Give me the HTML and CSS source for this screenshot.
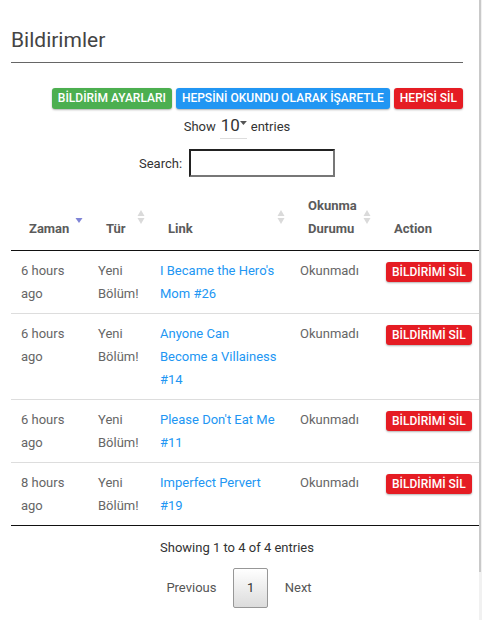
FILE: index.html
```html
<!DOCTYPE html>
<html lang="tr">
<head>
<meta charset="utf-8">
<title>Bildirimler</title>
<link rel="stylesheet" href="styles.css">
</head>
<body>
<div class="page">
  <h1 class="title">Bildirimler</h1>
  <hr class="rule">
  <div class="actions">
    <a class="btn btn-green">BİLDİRİM AYARLARI</a>
    <a class="btn btn-blue">HEPSİNİ OKUNDU OLARAK İŞARETLE</a>
    <a class="btn btn-red">HEPİSİ SİL</a>
  </div>
  <div class="length">
    <span>Show</span>
    <span class="select">10<svg class="caret" width="7" height="4" viewBox="0 0 7 4"><path d="M0 0H7L3.5 4Z" fill="#555"/></svg></span>
    <span>entries</span>
  </div>
  <div class="search">
    <label for="q">Search:</label>
    <input id="q" class="search-input" type="text">
  </div>
  <table class="table">
    <colgroup>
      <col class="c1"><col class="c2"><col class="c3"><col class="c4"><col class="c5">
    </colgroup>
    <thead>
      <tr>
        <th>Zaman<svg class="sort" width="8" height="14" viewBox="0 0 8 14"><path d="M0.5 8H7.5L4 13Z" fill="#7f84d6"/></svg></th>
        <th>Tür<svg class="sort" width="8" height="14" viewBox="0 0 8 14"><path d="M4 0L7.5 6H0.5Z M0.5 8H7.5L4 14Z" fill="#dadada"/></svg></th>
        <th>Link<svg class="sort" width="8" height="14" viewBox="0 0 8 14"><path d="M4 0L7.5 6H0.5Z M0.5 8H7.5L4 14Z" fill="#dadada"/></svg></th>
        <th>Okunma Durumu<svg class="sort" width="8" height="14" viewBox="0 0 8 14"><path d="M4 0L7.5 6H0.5Z M0.5 8H7.5L4 14Z" fill="#dadada"/></svg></th>
        <th class="nosort">Action</th>
      </tr>
    </thead>
    <tbody>
      <tr>
        <td>6 hours ago</td>
        <td>Yeni Bölüm!</td>
        <td class="linkcell"><a class="link">I Became the Hero's Mom #26</a></td>
        <td>Okunmadı</td>
        <td><a class="btn btn-red btn-sm">BİLDİRİMİ SİL</a></td>
      </tr>
      <tr>
        <td>6 hours ago</td>
        <td>Yeni Bölüm!</td>
        <td class="linkcell"><a class="link">Anyone Can Become a Villainess #14</a></td>
        <td>Okunmadı</td>
        <td><a class="btn btn-red btn-sm">BİLDİRİMİ SİL</a></td>
      </tr>
      <tr>
        <td>6 hours ago</td>
        <td>Yeni Bölüm!</td>
        <td class="linkcell"><a class="link">Please Don't Eat Me #11</a></td>
        <td>Okunmadı</td>
        <td><a class="btn btn-red btn-sm">BİLDİRİMİ SİL</a></td>
      </tr>
      <tr>
        <td>8 hours ago</td>
        <td>Yeni Bölüm!</td>
        <td class="linkcell"><a class="link">Imperfect Pervert #19</a></td>
        <td>Okunmadı</td>
        <td><a class="btn btn-red btn-sm">BİLDİRİMİ SİL</a></td>
      </tr>
    </tbody>
  </table>
  <div class="info">Showing 1 to 4 of 4 entries</div>
  <div class="paging">
    <a class="page-btn">Previous</a>
    <a class="page-btn current">1</a>
    <a class="page-btn">Next</a>
  </div>
</div>
<div class="scrollbar"><div class="thumb"></div></div>
</body>
</html>
```
FILE: styles.css
```css
html, body {
  margin: 0;
  padding: 0;
  background: #fff;
}
body {
  font-family: Roboto, "Liberation Sans", Arial, sans-serif;
  font-size: 13px;
  color: #666;
}
.page {
  width: 452px;
  padding: 0 0 0 11px;
}
.title {
  margin: 25px 0 0 0;
  font-size: 21px;
  line-height: 30px;
  font-weight: 400;
  color: #444;
}
.rule {
  margin: 7px 0 0 0;
  border: 0;
  border-top: 1px solid #666;
  height: 0;
}
.actions {
  display: flex;
  justify-content: flex-end;
  gap: 4px;
  margin-top: 25px;
}
.btn {
  display: inline-block;
  height: 21px;
  line-height: 21px;
  padding: 0 6px;
  font-size: 12px;
  font-weight: 500;
  color: #fff;
  border-radius: 3px;
  box-shadow: 0 1px 2px rgba(0, 0, 0, 0.3);
  white-space: nowrap;
}
.btn-green { background: #4caf50; }
.btn-blue { background: #2196f3; }
.btn-red { background: #e51c23; }
.btn-sm {
  height: 20px;
  line-height: 20px;
  vertical-align: middle;
  margin-top: 1px;
}
.length {
  display: flex;
  justify-content: center;
  align-items: baseline;
  gap: 4px;
  margin-top: 6px;
  color: #333;
}
.select {
  display: inline-flex;
  align-items: flex-start;
  width: 27px;
  font-size: 17px;
  line-height: 20px;
  padding: 0 0 3px 1px;
  border-bottom: 1px solid #ddd;
  color: #333;
  box-sizing: border-box;
}
.caret {
  margin-top: 6px;
}
.search {
  display: flex;
  justify-content: center;
  align-items: center;
  gap: 7px;
  margin-top: 10px;
  color: #333;
}
.search-input {
  width: 146px;
  height: 28px;
  box-sizing: border-box;
  margin: 0;
  border: 2px solid #222;
  border-right-color: #777;
  border-bottom-color: #777;
  border-radius: 0;
  outline: none;
}
.table {
  width: 468px;
  margin-top: 7px;
  border-collapse: collapse;
  table-layout: fixed;
}
.c1 { width: 77px; }
.c2 { width: 62px; }
.c3 { width: 140px; }
.c4 { width: 86px; }
.c5 { width: 103px; }
.table th {
  position: relative;
  padding: 10px 18px;
  text-align: left;
  vertical-align: bottom;
  line-height: 23px;
  font-weight: 700;
  color: #5b5b5b;
  border-bottom: 1px solid #111;
}
.sort {
  position: absolute;
  right: 5px;
  top: 50%;
  transform: translateY(-50%);
}
.table td {
  padding: 8px 10px;
  vertical-align: top;
  line-height: 23px;
  border-top: 1px solid #ddd;
}
.table td.linkcell {
  padding-right: 13px;
}
.table tbody tr:first-child td {
  border-top: 0;
}
.table tbody tr:last-child td {
  border-bottom: 1px solid #111;
}
.link {
  color: #2196f3;
}
.info {
  text-align: center;
  color: #333;
  margin-top: 13px;
  line-height: 18px;
}
.paging {
  display: flex;
  justify-content: center;
  gap: 3px;
  margin-top: 11px;
  padding-left: 4px;
}
.page-btn {
  display: inline-block;
  padding: 7px 13px;
  line-height: 24px;
  border: 1px solid transparent;
  border-radius: 2px;
  color: #555;
}
.page-btn.current {
  color: #333;
  border-color: #979797;
  background: linear-gradient(to bottom, #fff 0%, #dcdcdc 100%);
  padding: 7px 12.5px;
}
.scrollbar {
  position: fixed;
  top: 0;
  right: 0;
  width: 3px;
  height: 100%;
  background: #f1f1f1;
}
.thumb {
  width: 2px;
  height: 572px;
  background: #c9c9c9;
}
```
